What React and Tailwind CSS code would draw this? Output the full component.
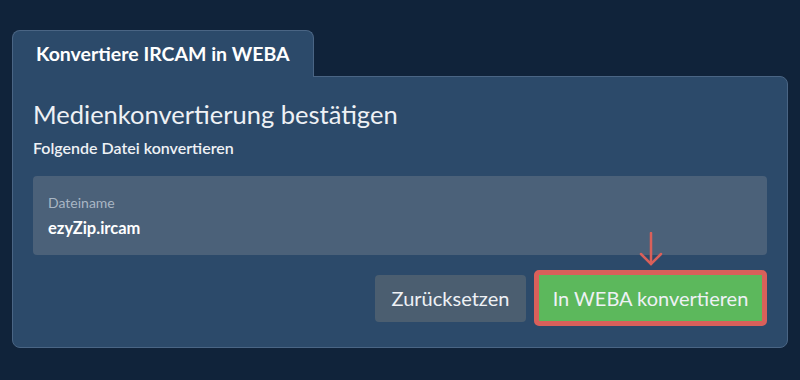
export default function App() {
  return (
    <div
      className="w-[800px] h-[380px] bg-[#10233a] pt-[30px] px-[12px]"
      style={{ fontFamily: "Lato, 'Noto Sans', sans-serif" }}
    >
      <div className="flex">
        <div className="relative z-10 -mb-px w-[302px] h-[47px] bg-[#2c4a6a] border border-b-0 border-[#4a6584] rounded-t-[8px] pl-[23px] flex items-center text-[19.5px] font-bold text-white">
          Konvertiere IRCAM in WEBA
        </div>
      </div>
      <div className="bg-[#2c4a6a] border border-[#4a6584] rounded-[8px] rounded-tl-none px-[20px] pt-[21px] pb-[21px]">
        <h1 className="text-[25.5px] leading-[32px] text-[#eef1f5]">Medienkonvertierung bestätigen</h1>
        <p className="mt-[8px] text-[16px] leading-[20px] font-semibold text-[#eef1f5]">Folgende Datei konvertieren</p>
        <div className="mt-[18px] h-[79px] bg-[#4b6179] rounded-[4px] px-[15px] pt-[18px]">
          <div className="text-[14px] leading-[17px] text-[#a9b6c4]">Dateiname</div>
          <div className="mt-[7px] text-[16.5px] leading-[20px] font-bold text-white">ezyZip.ircam</div>
        </div>
        <div className="mt-[15px] flex justify-end items-center gap-[8px]">
          <button className="h-[47px] w-[151px] rounded-[4px] bg-[#4b5e70] text-[20px] text-[#eef1f5]">
            Zurücksetzen
          </button>
          <div className="relative">
            <svg
              className="absolute left-1/2 -translate-x-1/2 -top-[38px]"
              width="28"
              height="36"
              viewBox="0 0 28 36"
              fill="none"
              stroke="#d9605a"
              strokeWidth="2.5"
              strokeLinecap="round"
            >
              <path d="M14 1 V32" />
              <path d="M4 22 L14 32 L24 22" />
            </svg>
            <button className="h-[56px] w-[233px] rounded-[5px] border-[5px] border-[#d9605a] bg-[#5cb85c] text-[20px] text-[#eef1f5]">
              In WEBA konvertieren
            </button>
          </div>
        </div>
      </div>
    </div>
  );
}
